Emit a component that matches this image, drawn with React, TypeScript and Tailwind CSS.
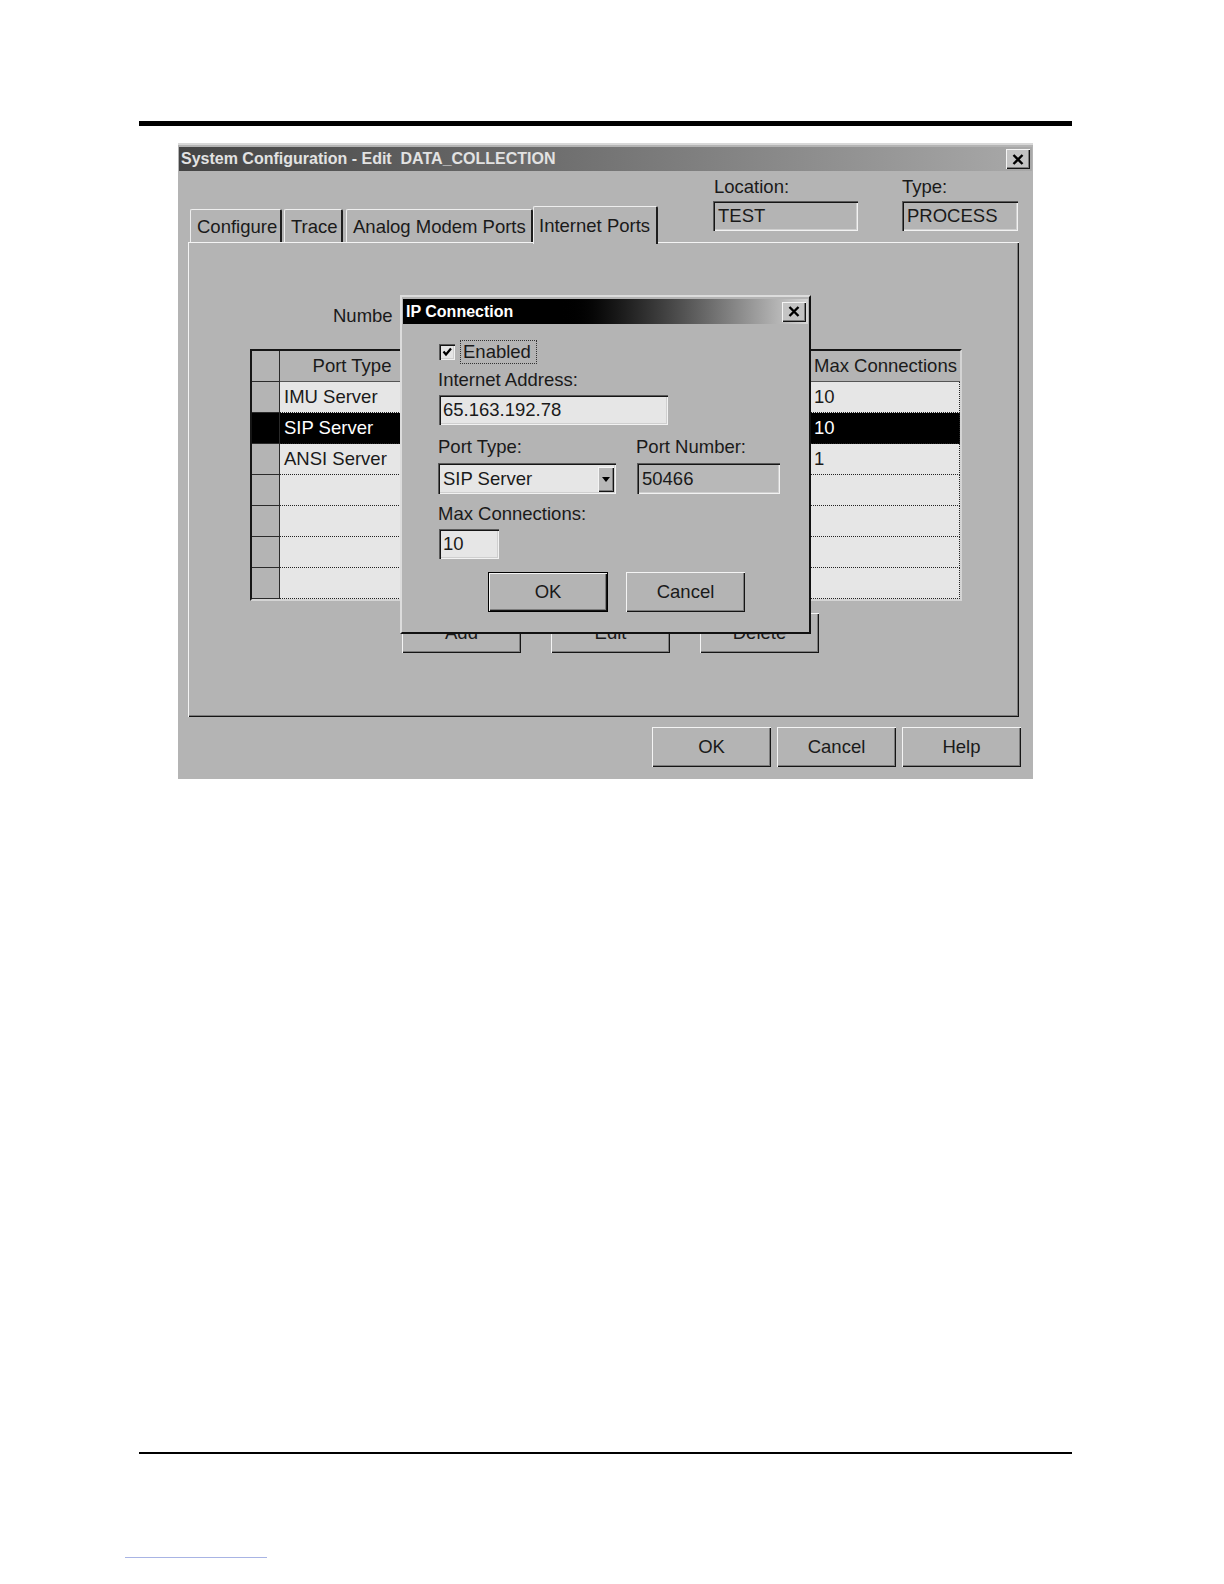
import React from "react";

const raised =
  "shadow-[inset_1px_1px_0_#f4f4f4,inset_-1px_-1px_0_#151515,inset_-2px_-2px_0_#7c7c7c]";
const sunken =
  "shadow-[inset_1px_1px_0_#5a5a5a,inset_2px_2px_0_#151515,inset_-1px_-1px_0_#f2f2f2,inset_-2px_-2px_0_#cfcfcf]";

function CloseBtn() {
  return (
    <div
      className={`w-[24px] h-[20px] bg-[#c4c4c4] flex items-center justify-center ${raised}`}
    >
      <svg width="12" height="11" viewBox="0 0 12 11">
        <path d="M1.5 1 L10.5 10 M10.5 1 L1.5 10" stroke="#000" strokeWidth="2.4" />
      </svg>
    </div>
  );
}

function Btn({ label, w, def }: { label: string; w: string; def?: boolean }) {
  return (
    <div
      className={`${w} h-[40px] bg-[#b4b4b4] flex items-center justify-center text-[18.5px] text-[#1a1a1a] ${
        def ? "border border-black" : ""
      } ${raised}`}
    >
      {label}
    </div>
  );
}

function Tab({ label, w, sel }: { label: string; w: string; sel?: boolean }) {
  if (sel)
    return (
      <div
        className={`${w} h-[38px] -mb-[2px] relative z-10 bg-[#b4b4b4] border-t border-l border-[#eeeeee] border-r-2 border-r-[#1e1e1e] rounded-t-[2px] flex items-start pt-[5px] pl-[5px] text-[18.5px] text-[#1a1a1a]`}
      >
        {label}
      </div>
    );
  return (
    <div
      className={`${w} h-[33px] bg-[#b4b4b4] border-t border-l border-[#eeeeee] border-r-2 border-r-[#1e1e1e] rounded-t-[2px] flex items-center pl-[6px] pt-[2px] text-[18.5px] text-[#1a1a1a]`}
    >
      {label}
    </div>
  );
}

const rows = [
  { t: "IMU Server", m: "10" },
  { t: "SIP Server", m: "10", sel: true },
  { t: "ANSI Server", m: "1" },
  { t: "", m: "" },
  { t: "", m: "" },
  { t: "", m: "" },
  { t: "", m: "" },
];

function Table() {
  return (
    <div className="ml-[62px] mt-[23px] w-[712px] h-[252px] border-t-2 border-l-2 border-[#151515] border-r-2 border-b-2 border-r-[#d4d4d4] border-b-[#d4d4d4] flex flex-col">
      <div className="flex h-[31px]">
        <div className="w-[28px] h-full bg-[#b4b4b4] border-r border-b border-[#2a2a2a]" />
        <div className="w-[145px] h-full bg-[#b4b4b4] border-b border-r border-b-[#555] border-r-[#8a8a8a] flex items-center justify-center text-[18.5px] text-[#1a1a1a]">
          Port Type
        </div>
        <div className="w-[193px] h-full bg-[#b4b4b4] border-b border-r border-b-[#555] border-r-[#8a8a8a]" />
        <div className="w-[193px] h-full bg-[#b4b4b4] border-b border-r border-b-[#555] border-r-[#8a8a8a]" />
        <div className="w-[149px] h-full bg-[#b4b4b4] border-b border-b-[#555] flex items-center pl-[3px] text-[18.5px] text-[#1a1a1a] whitespace-nowrap overflow-hidden">
          Max Connections
        </div>
      </div>
      {rows.map((r, i) => (
        <div key={i} className="flex h-[31px]">
          <div
            className={`w-[28px] h-full border-r border-b border-[#2a2a2a] ${
              r.sel ? "bg-black" : "bg-[#b4b4b4]"
            }`}
          />
          <div
            className={`w-[145px] h-full border-b border-r border-dotted border-[#222] flex items-center pl-[4px] text-[18.5px] ${
              r.sel ? "bg-black text-white" : "bg-[#e6e6e6] text-[#1a1a1a]"
            }`}
          >
            {r.t}
          </div>
          <div
            className={`w-[193px] h-full border-b border-r border-dotted border-[#222] ${
              r.sel ? "bg-black" : "bg-[#e6e6e6]"
            }`}
          />
          <div
            className={`w-[193px] h-full border-b border-r border-dotted border-[#222] ${
              r.sel ? "bg-black" : "bg-[#e6e6e6]"
            }`}
          />
          <div
            className={`w-[149px] h-full border-b border-r border-dotted border-[#222] flex items-center pl-[3px] text-[18.5px] ${
              r.sel ? "bg-black text-white" : "bg-[#e6e6e6] text-[#1a1a1a]"
            }`}
          >
            {r.m}
          </div>
        </div>
      ))}
    </div>
  );
}

function Dialog() {
  return (
    <div className="absolute left-[222px] top-[150px] w-[411px] h-[339px] bg-[#b4b4b4] border-t-2 border-l-2 border-[#dcdcdc] border-r-2 border-b-2 border-r-[#111] border-b-[#111] p-[1px] pt-[2px] flex flex-col">
      <div className="h-[25px] bg-linear-to-r from-black from-[38%] to-[#d6d6d6] flex items-center justify-between pl-[3px] pr-[2px]">
        <span className="text-white font-bold text-[16px] leading-none">IP Connection</span>
        <CloseBtn />
      </div>
      <div className="flex flex-col text-[18.5px] text-[#1a1a1a]">
        <div className="mt-[16px] h-[24px] flex items-center ml-[36px]">
          <div
            className={`w-[16px] h-[16px] bg-[#e6e6e6] flex items-center justify-center ${sunken}`}
          >
            <svg width="12" height="12" viewBox="0 0 12 12">
              <path d="M2.5 5.5 L5 8.5 L10 2.5" stroke="#000" strokeWidth="2.2" fill="none" />
            </svg>
          </div>
          <div className="ml-[5px] h-[24px] w-[77px] border border-dotted border-[#333] flex items-center pl-[2px]">
            Enabled
          </div>
        </div>
        <div className="mt-[5px] h-[22px] leading-[22px] ml-[35px]">Internet Address:</div>
        <div
          className={`mt-[4px] ml-[36px] w-[229px] h-[30px] bg-[#e6e6e6] flex items-center pl-[4px] ${sunken}`}
        >
          65.163.192.78
        </div>
        <div className="mt-[11px] flex">
          <div className="ml-[35px] w-[178px] flex flex-col">
            <div className="h-[22px] leading-[22px]">Port Type:</div>
            <div
              className={`mt-[5px] w-[178px] h-[31px] bg-[#e6e6e6] flex items-center justify-between pl-[5px] pr-[2px] ${sunken}`}
            >
              <span>SIP Server</span>
              <div
                className={`w-[16px] h-[25px] bg-[#b8b8b8] flex items-center justify-center mt-[1px] ${raised}`}
              >
                <svg width="8" height="5" viewBox="0 0 8 5">
                  <path d="M0 0 L8 0 L4 5 Z" fill="#000" />
                </svg>
              </div>
            </div>
          </div>
          <div className="ml-[21px] flex flex-col">
            <div className="h-[22px] leading-[22px] -ml-[1px]">Port Number:</div>
            <div
              className={`mt-[5px] w-[143px] h-[31px] bg-[#b8b8b8] flex items-center pl-[5px] ${sunken}`}
            >
              50466
            </div>
          </div>
        </div>
        <div className="mt-[9px] h-[22px] leading-[22px] ml-[35px]">Max Connections:</div>
        <div
          className={`mt-[4px] ml-[36px] w-[60px] h-[30px] bg-[#e6e6e6] flex items-center pl-[4px] ${sunken}`}
        >
          10
        </div>
        <div className="mt-[13px] ml-[85px] flex gap-[18px]">
          <Btn label="OK" w="w-[120px]" def />
          <Btn label="Cancel" w="w-[119px]" />
        </div>
      </div>
    </div>
  );
}

export default function App() {
  return (
    <div className="w-[1224px] h-[1584px] bg-white overflow-hidden font-['Liberation_Sans',Arial,sans-serif] pt-[121px]">
      <div className="ml-[139px] w-[933px] h-[5px] bg-black" />
      <div className="relative mt-[17px] ml-[178px] w-[855px] h-[636px] bg-[#b4b4b4] border-t-2 border-[#d8d8d8] pt-[2px] flex flex-col">
        <div className="mx-[1px] h-[24px] bg-linear-to-r from-[#444444] to-[#a9a9a9] flex items-center justify-between pl-[2px] pr-[2px]">
          <span className="text-[#e2e2e2] font-bold text-[16px] leading-none whitespace-pre">
            System Configuration - Edit  DATA_COLLECTION
          </span>
          <CloseBtn />
        </div>
        <div className="h-[71px] flex items-end">
          <div className="ml-[12px] flex items-end">
            <Tab label="Configure" w="w-[92px]" />
            <div className="w-[2px]" />
            <Tab label="Trace" w="w-[59px]" />
            <div className="w-[3px]" />
            <Tab label="Analog Modem Ports" w="w-[187px]" />
            <Tab label="Internet Ports" w="w-[125px]" sel />
          </div>
          <div className="self-start pt-[6px] ml-[55px] flex flex-col">
            <div className="h-[20px] leading-[20px] text-[18.5px] text-[#1a1a1a] ml-[1px]">
              Location:
            </div>
            <div
              className={`mt-[4px] w-[145px] h-[30px] flex items-center pl-[5px] text-[18.5px] text-[#1a1a1a] ${sunken}`}
            >
              TEST
            </div>
          </div>
          <div className="self-start pt-[6px] ml-[44px] flex flex-col">
            <div className="h-[20px] leading-[20px] text-[18.5px] text-[#1a1a1a]">Type:</div>
            <div
              className={`mt-[4px] w-[116px] h-[30px] flex items-center pl-[5px] text-[18.5px] text-[#1a1a1a] ${sunken}`}
            >
              PROCESS
            </div>
          </div>
        </div>
        <div
          className={`ml-[10px] w-[831px] h-[475px] flex flex-col shrink-0 ${raised}`}
        >
          <div className="mt-[64px] ml-[145px] w-[60px] h-[20px] leading-[20px] text-[18.5px] text-[#1a1a1a] whitespace-nowrap overflow-hidden">
            Number of Ports:
          </div>
          <Table />
          <div className="mt-[12px] ml-[214px] flex gap-[30px]">
            <Btn label="Add" w="w-[119px]" />
            <Btn label="Edit" w="w-[119px]" />
            <Btn label="Delete" w="w-[119px]" />
          </div>
        </div>
        <div className="mt-[10px] pr-[12px] flex justify-end gap-[6px]">
          <Btn label="OK" w="w-[119px]" />
          <Btn label="Cancel" w="w-[119px]" />
          <Btn label="Help" w="w-[119px]" />
        </div>
        <Dialog />
      </div>
      <div className="mt-[673px] ml-[139px] w-[933px] h-[2px] bg-black" />
      <div className="mt-[103px] ml-[125px] w-[142px] h-[1px] bg-[#a8b4e4]" />
    </div>
  );
}
